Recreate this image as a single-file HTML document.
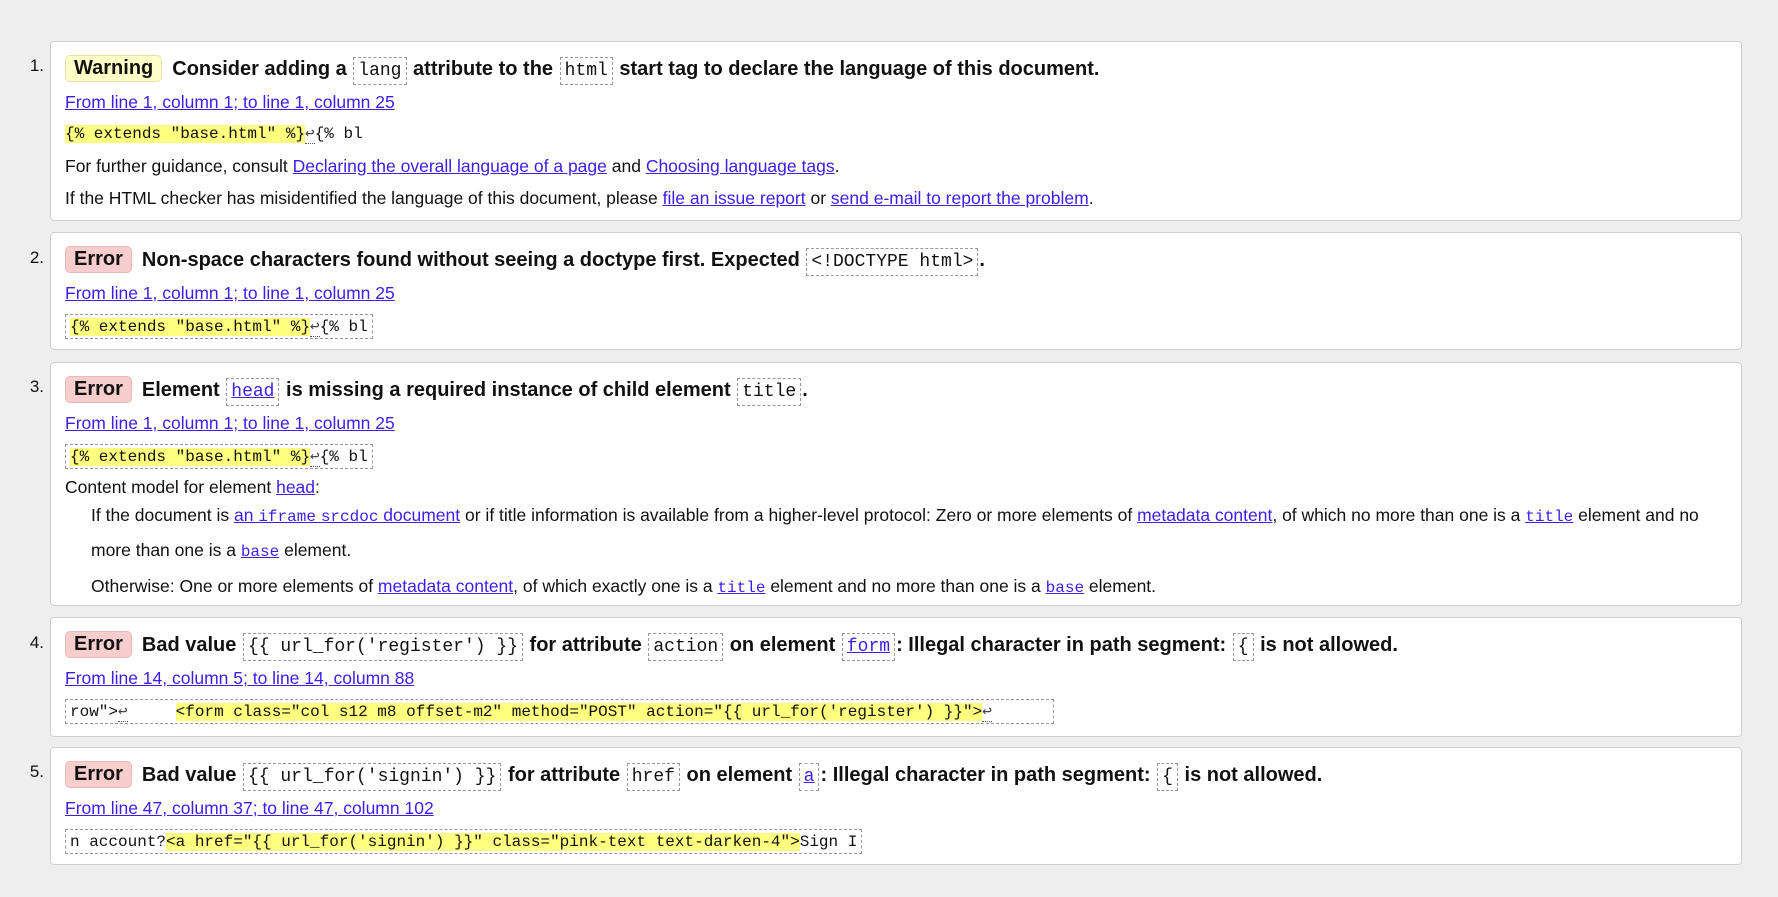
<!DOCTYPE html>
<html><head><meta charset="utf-8"><style>
body{margin:0;background:#eeeeee;font-family:"Liberation Sans",Arial,sans-serif;color:#111;width:1778px;height:897px;overflow:hidden;position:relative}
.num{position:absolute;left:0;width:44px;text-align:right;font-size:17px}
.card{position:absolute;left:50px;width:1692px;background:#fff;border:1px solid #cfcfcf;border-radius:4px;box-sizing:border-box;padding:10px 14px 8px 14px}
.h{height:34px;line-height:34px;font-size:20px;font-weight:bold;white-space:nowrap}
.badge{display:inline-block;height:25px;line-height:25px;padding:0 8px;border-radius:5px;margin-right:10px;font-size:20px;vertical-align:1px}
.warn{background:#ffffc8;border:1px solid #e6e3a8}
.err{background:#f8cdcd;border:1px solid #ebb7b7}
.hc{font-family:"Liberation Mono",monospace;font-weight:normal;font-size:18px;border:1px dashed #999;padding:3px 4px;margin:0 1px}
.l{height:32px;line-height:32px;font-size:17.5px;white-space:nowrap}
a{color:#3a1ff0;text-decoration:underline}
.code{font-family:"Liberation Mono",monospace;font-size:16px;white-space:pre}
.box{display:inline-block;border:1px dashed #999;line-height:22px;padding:1px 4px 0 4px}
.hl{background:#ffff80}
.ret{color:#444;border-bottom:1px dotted #555}
.ind{padding-left:26px;line-height:33px;font-size:17.5px;margin-top:-4px}
.mono{font-family:"Liberation Mono",monospace;font-size:16px}
</style></head><body>

<div class="num" style="top:56px">1.</div>
<div class="card" style="top:41px;height:180px">
 <div class="h"><span class="badge warn">Warning</span>Consider adding a <span class="hc">lang</span> attribute to the <span class="hc">html</span> start tag to declare the language of this document.</div>
 <div class="l"><a>From line 1, column 1; to line 1, column 25</a></div>
 <div class="l code"><span class="hl">{% extends "base.html" %}</span><span class="ret">↩</span>{% bl</div>
 <div class="l">For further guidance, consult <a>Declaring the overall language of a page</a> and <a>Choosing language tags</a>.</div>
 <div class="l">If the HTML checker has misidentified the language of this document, please <a>file an issue report</a> or <a>send e-mail to report the problem</a>.</div>
</div>

<div class="num" style="top:248px">2.</div>
<div class="card" style="top:232px;height:118px">
 <div class="h"><span class="badge err">Error</span>Non-space characters found without seeing a doctype first. Expected <span class="hc">&lt;!DOCTYPE html&gt;</span>.</div>
 <div class="l"><a>From line 1, column 1; to line 1, column 25</a></div>
 <div class="l"><span class="code box"><span class="hl">{% extends "base.html" %}</span><span class="ret">↩</span>{% bl</span></div>
</div>

<div class="num" style="top:377px">3.</div>
<div class="card" style="top:362px;height:244px">
 <div class="h"><span class="badge err">Error</span>Element <span class="hc"><a>head</a></span> is missing a required instance of child element <span class="hc">title</span>.</div>
 <div class="l"><a>From line 1, column 1; to line 1, column 25</a></div>
 <div class="l"><span class="code box"><span class="hl">{% extends "base.html" %}</span><span class="ret">↩</span>{% bl</span></div>
 <div class="l">Content model for element <a>head</a>:</div>
 <div class="ind">If the document is <a>an <span class="mono">iframe</span> <span class="mono">srcdoc</span> document</a> or if title information is available from a higher-level protocol: Zero or more elements of <a>metadata content</a>, of which no more than one is a <a class="mono">title</a> element and no<br>more than one is a <a class="mono">base</a> element.</div>
 <div class="ind" style="margin-top:1px">Otherwise: One or more elements of <a>metadata content</a>, of which exactly one is a <a class="mono">title</a> element and no more than one is a <a class="mono">base</a> element.</div>
</div>

<div class="num" style="top:633px">4.</div>
<div class="card" style="top:617px;height:120px">
 <div class="h"><span class="badge err">Error</span>Bad value <span class="hc">{{ url_for('register') }}</span> for attribute <span class="hc">action</span> on element <span class="hc"><a>form</a></span>: Illegal character in path segment: <span class="hc">{</span> is not allowed.</div>
 <div class="l"><a>From line 14, column 5; to line 14, column 88</a></div>
 <div class="l"><span class="code box">row"&gt;<span class="ret">↩</span>     <span class="hl">&lt;form class="col s12 m8 offset-m2" method="POST" action="{{ url_for('register') }}"&gt;</span><span class="ret">↩</span>      </span></div>
</div>

<div class="num" style="top:762px">5.</div>
<div class="card" style="top:747px;height:118px">
 <div class="h"><span class="badge err">Error</span>Bad value <span class="hc">{{ url_for('signin') }}</span> for attribute <span class="hc">href</span> on element <span class="hc"><a>a</a></span>: Illegal character in path segment: <span class="hc">{</span> is not allowed.</div>
 <div class="l"><a>From line 47, column 37; to line 47, column 102</a></div>
 <div class="l"><span class="code box">n account?<span class="hl">&lt;a href="{{ url_for('signin') }}" class="pink-text text-darken-4"&gt;</span>Sign I</span></div>
</div>

</body></html>
